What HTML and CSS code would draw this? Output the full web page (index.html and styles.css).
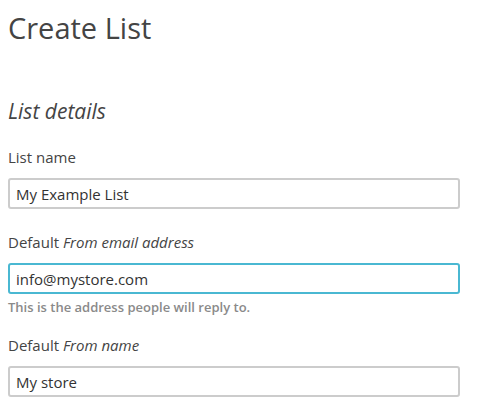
FILE: index.html
```html
<!DOCTYPE html>
<html>
<head>
<meta charset="utf-8">
<link rel="stylesheet" href="styles.css">
</head>
<body>
<div class="page">
  <h1 class="title">Create List</h1>
  <h2 class="section">List details</h2>
  <div class="field">
    <label class="label">List name</label>
    <input class="input" type="text" value="My Example List">
  </div>
  <div class="field">
    <label class="label">Default <em>From email address</em></label>
    <input class="input focused" type="text" value="info@mystore.com">
    <div class="help">This is the address people will reply to.</div>
  </div>
  <div class="field">
    <label class="label">Default <em>From name</em></label>
    <input class="input" type="text" value="My store">
  </div>
</div>
</body>
</html>
```
FILE: styles.css
```css
html, body {
  margin: 0;
  padding: 0;
  background: #fff;
}
.page {
  padding: 8px 27px 0 8px;
  font-family: "Open Sans", "Liberation Sans", sans-serif;
  color: #444;
}
.title {
  margin: 0;
  font-size: 29px;
  font-weight: 400;
  line-height: 40px;
  color: #444;
}
.section {
  margin: 49px 0 0;
  font-size: 21px;
  font-style: italic;
  font-weight: 400;
  line-height: 28px;
  color: #444;
}
.field {
  display: flex;
  flex-direction: column;
  margin-top: 22px;
}
.field + .field {
  margin-top: 23px;
}
.label {
  font-size: 15px;
  line-height: 20px;
  color: #444;
}
.label em {
  font-style: italic;
}
.input {
  box-sizing: border-box;
  margin-top: 11px;
  height: 31px;
  width: 100%;
  padding: 0 6px;
  border: 2px solid #cccccc;
  border-radius: 3px;
  font-family: "Open Sans", "Liberation Sans", sans-serif;
  font-size: 15px;
  color: #333;
  background: #fff;
  outline: none;
}
.input.focused {
  border-color: #4ab8d2;
}
.help {
  margin-top: 4px;
  font-size: 13px;
  font-weight: 600;
  line-height: 18px;
  color: #8a8a8a;
}
.field:has(.help) + .field {
  margin-top: 19px;
}
```
